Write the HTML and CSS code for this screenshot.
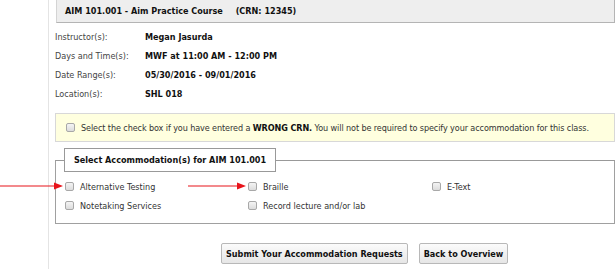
FILE: index.html
```html
<!DOCTYPE html>
<html lang="en">
<head>
    <meta charset="UTF-8">
    <title>Select Accommodations</title>
    <link rel="stylesheet" href="styles.css">
</head>
<body>
    <div class="page">
        <div class="course-header">AIM 101.001 - Aim Practice Course <span class="crn">(CRN: 12345)</span></div>

        <div class="info">
            <div class="info-label">Instructor(s):</div>
            <div class="info-value">Megan Jasurda</div>
            <div class="info-label">Days and Time(s):</div>
            <div class="info-value">MWF at 11:00 AM - 12:00 PM</div>
            <div class="info-label">Date Range(s):</div>
            <div class="info-value">05/30/2016 - 09/01/2016</div>
            <div class="info-label">Location(s):</div>
            <div class="info-value">SHL 018</div>
        </div>

        <label class="wrong-crn">
            <input type="checkbox" class="check">
            <span>Select the check box if you have entered a <b>WRONG CRN.</b> You will not be required to specify your accommodation for this class.</span>
        </label>

        <fieldset class="accommodations">
            <legend>Select Accommodation(s) for AIM 101.001</legend>
            <div class="options">
                <label class="option"><input type="checkbox" class="check"> Alternative Testing</label>
                <label class="option"><input type="checkbox" class="check"> Braille</label>
                <label class="option"><input type="checkbox" class="check"> E-Text</label>
                <label class="option"><input type="checkbox" class="check"> Notetaking Services</label>
                <label class="option"><input type="checkbox" class="check"> Record lecture and/or lab</label>
            </div>
        </fieldset>

        <div class="actions">
            <button class="btn">Submit Your Accommodation Requests</button>
            <button class="btn">Back to Overview</button>
        </div>
    </div>

    <!-- annotation arrows drawn over the form -->
    <svg class="arrows" width="250" height="12" viewBox="0 0 250 12">
        <line x1="0" y1="6" x2="55" y2="6" stroke="#e8141b" stroke-width="1.2"/>
        <polygon points="54,2.5 63,6 54,9.5" fill="#e8141b"/>
        <line x1="188" y1="6" x2="238" y2="6" stroke="#e8141b" stroke-width="1.2"/>
        <polygon points="237,2.5 246,6 237,9.5" fill="#e8141b"/>
    </svg>
</body>
</html>
```

FILE: styles.css
```css
body {
    margin: 0;
    background: #fff;
    color: #222;
    font-family: "DejaVu Sans Condensed", "Liberation Sans", sans-serif;
    font-size: 9px;
    position: relative;
    height: 269px;
    overflow: hidden;
}

.page {
    margin-left: 48px;
    margin-right: 1px;
    padding-left: 6px;
    border-left: 1px solid #e4e4e4;
    height: 269px;
}

.course-header {
    margin-left: 1px;
    height: 22px;
    line-height: 22px;
    padding-left: 8px;
    background: #eeeeee;
    border: 1px solid #d4d4d4;
    border-top: none;
    border-bottom-color: #b4b4b4;
    border-right-color: #b4b4b4;
    font-weight: bold;
    color: #111;
}

.crn {
    margin-left: 10px;
}

.info {
    display: grid;
    grid-template-columns: 90px 1fr;
    grid-auto-rows: 19px;
    align-items: center;
    margin-top: 4px;
}

.info-label {
    color: #444;
}

.info-value {
    font-weight: bold;
    color: #111;
}

.wrong-crn {
    display: flex;
    align-items: center;
    gap: 6px;
    margin-top: 10px;
    height: 27px;
    padding-left: 10px;
    background: #ffffdf;
    border: 1px solid #d8d8d8;
    color: #333;
    letter-spacing: -0.1px;
}

.wrong-crn b {
    color: #111;
}

.check {
    appearance: none;
    -webkit-appearance: none;
    margin: 0;
    width: 9px;
    height: 9px;
    border: 1px solid #a8a8a8;
    border-radius: 2px;
    background: linear-gradient(#f4f4f4, #dcdcdc);
    flex-shrink: 0;
}

.accommodations {
    margin: 6px 0 0 0;
    padding: 0 0 8px 8px;
    border: 1px solid #a0a0a0;
    border-top-color: #999;
}

.accommodations legend {
    height: 22px;
    line-height: 22px;
    padding: 0 9px;
    border: 1px solid #999;
    background: #fff;
    font-weight: bold;
    color: #111;
}

.options {
    display: grid;
    grid-template-columns: 183px 184px 1fr;
    grid-auto-rows: 19px;
    align-items: center;
    margin-top: 5px;
    padding-left: 1px;
}

.option {
    display: flex;
    align-items: center;
    gap: 6px;
    color: #333;
}

.actions {
    display: flex;
    gap: 11px;
    margin-top: 19px;
    padding-left: 166px;
}

.btn {
    height: 21px;
    padding: 0 4px;
    font-family: inherit;
    font-size: 9px;
    font-weight: bold;
    color: #111;
    background: linear-gradient(#fbfbfb, #e6e6e6);
    border: 1px solid #b8b8b8;
    border-radius: 2px;
}

.arrows {
    position: absolute;
    left: 0;
    top: 180px;
}
```
